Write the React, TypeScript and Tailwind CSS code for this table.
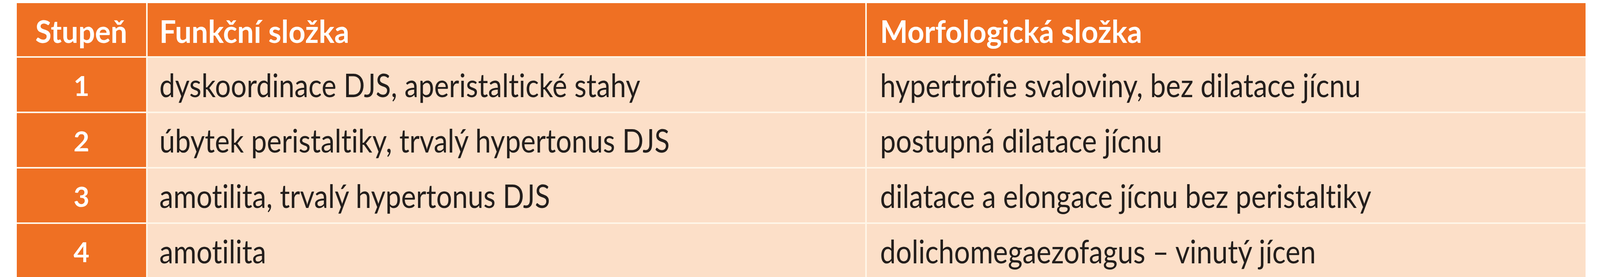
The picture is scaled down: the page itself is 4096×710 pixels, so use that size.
const rows = [
  {
    stage: '1',
    func: 'dyskoordinace DJS, aperistaltické stahy',
    morph: 'hypertrofie svaloviny, bez dilatace jícnu',
  },
  {
    stage: '2',
    func: 'úbytek peristaltiky, trvalý hypertonus DJS',
    morph: 'postupná dilatace jícnu',
  },
  {
    stage: '3',
    func: 'amotilita, trvalý hypertonus DJS',
    morph: 'dilatace a elongace jícnu bez peristaltiky',
  },
  {
    stage: '4',
    func: 'amotilita',
    morph: 'dolichomegaezofagus – vinutý jícen',
  },
]

function Text({ children, bold = false }: { children: string; bold?: boolean }) {
  return (
    <span
      className={
        bold
          ? 'inline-block origin-left scale-x-[0.94] whitespace-nowrap text-[80px] font-bold leading-none text-white'
          : 'inline-block origin-left scale-x-[0.855] whitespace-nowrap text-[84px] leading-none text-[#231e1c]'
      }
    >
      {children}
    </span>
  )
}

export default function App() {
  return (
    <div className="min-h-screen bg-white pl-[43px] pt-[8px] font-['Lato','Noto_Sans',sans-serif] [font-variant-ligatures:none]">
      <div className="grid w-[4016px] grid-cols-[331px_1837px_1840px] gap-[4px] bg-[#fff6e8]">
        {/* header */}
        <div className="flex h-[136px] items-center justify-center bg-[#ef7023] pt-[6px]">
          <span className="inline-block scale-x-[0.94] whitespace-nowrap text-[80px] font-bold leading-none text-white">
            Stupeň
          </span>
        </div>
        <div className="flex h-[136px] items-center bg-[#ef7023] pl-[30px] pt-[6px]">
          <Text bold>Funkční složka</Text>
        </div>
        <div className="flex h-[136px] items-center bg-[#ef7023] pl-[34px] pt-[6px]">
          <Text bold>Morfologická složka</Text>
        </div>

        {rows.map((row) => (
          <div key={row.stage} className="contents">
            <div className="flex h-[138px] items-center justify-center bg-[#ef7023] pt-[4px]">
              <span className="text-[70px] font-bold leading-none text-white">{row.stage}</span>
            </div>
            <div className="flex h-[138px] items-center bg-[#fcdfc8] pl-[30px]">
              <Text>{row.func}</Text>
            </div>
            <div className="flex h-[138px] items-center bg-[#fcdfc8] pl-[34px]">
              <Text>{row.morph}</Text>
            </div>
          </div>
        ))}
      </div>
    </div>
  )
}
